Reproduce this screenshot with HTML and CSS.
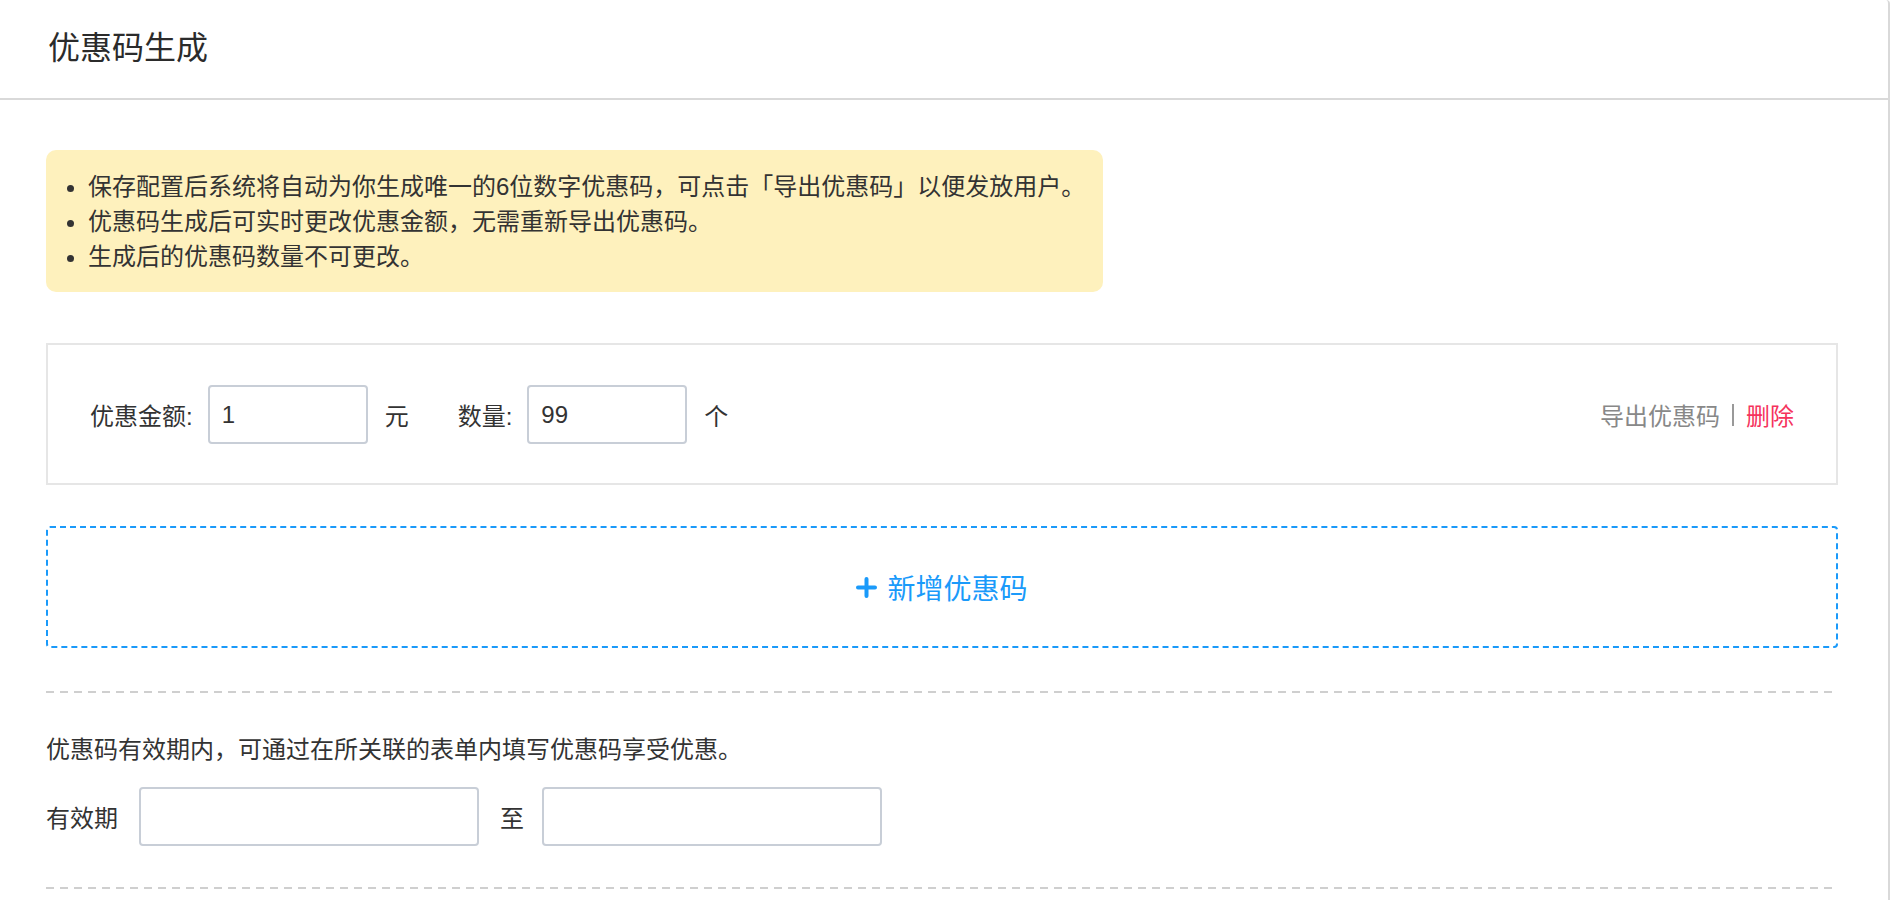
FILE: index.html
```html
<!DOCTYPE html>
<html>
<head>
    <meta charset="utf-8">
    <title>优惠码生成</title>
    <link rel="stylesheet" href="styles.css">
</head>
<body>
    <div class="panel">
        <header class="panel-header">
            <h1>优惠码生成</h1>
        </header>

        <main class="panel-body">
            <ul class="notice">
                <li>保存配置后系统将自动为你生成唯一的6位数字优惠码，可点击「导出优惠码」以便发放用户。</li>
                <li>优惠码生成后可实时更改优惠金额，无需重新导出优惠码。</li>
                <li>生成后的优惠码数量不可更改。</li>
            </ul>

            <div class="coupon-card">
                <div class="coupon-fields">
                    <label for="amount">优惠金额:</label>
                    <input type="text" id="amount" class="field" value="1">
                    <span class="unit">元</span>
                    <label for="count" class="label-count">数量:</label>
                    <input type="text" id="count" class="field" value="99">
                    <span class="unit">个</span>
                </div>
                <div class="coupon-actions">
                    <a href="#" class="link-export">导出优惠码</a>
                    <span class="sep"></span>
                    <a href="#" class="link-delete">删除</a>
                </div>
            </div>

            <button class="add-coupon">
                <svg width="21" height="21" viewBox="0 0 21 21"><path d="M10.5 2v17M2 10.5h17" stroke="currentColor" stroke-width="4" stroke-linecap="round"/></svg>
                新增优惠码
            </button>

            <div class="divider"></div>

            <p class="hint">优惠码有效期内，可通过在所关联的表单内填写优惠码享受优惠。</p>

            <div class="validity">
                <span>有效期</span>
                <input type="text" class="field field-date">
                <span class="to">至</span>
                <input type="text" class="field field-date">
            </div>

            <div class="divider"></div>
        </main>
    </div>
</body>
</html>
```

FILE: styles.css
```css
body {
    margin: 0;
    font-family: "Liberation Sans", "Noto Sans CJK SC", sans-serif;
    color: #333;
    background-color: #fff;
}
.panel {
    min-height: 100vh;
    border-right: 2px solid #d9d9d9;
    border-top-right-radius: 4px;
    box-sizing: border-box;
}
.panel-header {
    height: 98px;
    border-bottom: 2px solid #d9d9d9;
    display: flex;
    align-items: center;
    padding-left: 48px;
}
.panel-header h1 {
    margin: 0;
    font-size: 32px;
    font-weight: normal;
    color: #2b2b2b;
    line-height: 40px;
    margin-top: -2px;
}
.panel-body {
    padding: 50px 50px 0 46px;
}
.notice {
    width: fit-content;
    margin: 0;
    padding: 19px 18px 18px 42px;
    background-color: #fef1bd;
    border-radius: 10px;
    font-size: 24px;
    line-height: 35px;
    color: #333;
}
.coupon-card {
    margin-top: 51px;
    border: 2px solid #e6e6e6;
    padding: 40px 42px 39px;
    display: flex;
    align-items: center;
    justify-content: space-between;
}
.coupon-fields {
    display: flex;
    align-items: center;
    gap: 17px;
    font-size: 24px;
}
.coupon-fields label {
    margin-right: -2px;
}
.label-count {
    margin-left: 32px;
}
.field {
    box-sizing: border-box;
    width: 160px;
    height: 59px;
    border: 2px solid #c8ced7;
    border-radius: 4px;
    padding: 0 12px;
    font-family: "Liberation Sans", "Noto Sans CJK SC", sans-serif;
    font-size: 24px;
    color: #333;
    outline: none;
}
.coupon-actions {
    display: flex;
    align-items: center;
    font-size: 24px;
}
.coupon-actions a {
    text-decoration: none;
}
.link-export {
    color: #888;
}
.link-delete {
    color: #f5335d;
}
.sep {
    width: 2px;
    height: 22px;
    background-color: #999;
    margin: 0 12px;
}
.add-coupon {
    display: flex;
    align-items: center;
    justify-content: center;
    gap: 10px;
    width: 100%;
    height: 122px;
    margin-top: 41px;
    border: 2px dashed #1a9afa;
    border-radius: 4px;
    background: #fff;
    color: #1a9afa;
    font-family: "Liberation Sans", "Noto Sans CJK SC", sans-serif;
    font-size: 28px;
    cursor: pointer;
}
.divider {
    height: 2px;
    margin-top: 43px;
    background-image: linear-gradient(90deg, #cfcfcf 8px, transparent 8px);
    background-size: 14px 2px;
    background-repeat: space no-repeat;
}
.hint {
    margin: 39px 0 0;
    font-size: 24px;
    line-height: 36px;
}
.validity {
    display: flex;
    align-items: center;
    gap: 21px;
    margin-top: 19px;
    font-size: 24px;
}
.validity .to {
    margin-right: -3px;
}
.field-date {
    width: 340px;
}
.validity + .divider {
    margin-top: 41px;
}
```
